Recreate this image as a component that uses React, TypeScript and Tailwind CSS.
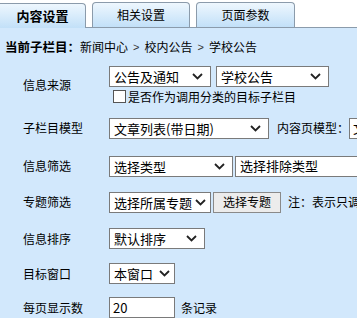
import React from "react";

const font = { fontFamily: '"Noto Sans CJK SC", "Liberation Sans", sans-serif' };

function Chevron() {
  return (
    <svg width="11" height="7" viewBox="0 0 11 7" className="shrink-0">
      <path d="M1 1 L5.5 5.5 L10 1" fill="none" stroke="#222" strokeWidth="1.8" />
    </svg>
  );
}

function Sel({ text, w, pr = "pr-[7px]" }: { text: string; w: string; pr?: string }) {
  return (
    <div className={`${w} h-[21px] shrink-0 border border-[#7a7a7a] bg-white flex items-center justify-between pl-[4px] ${pr} text-[13px] leading-none text-black overflow-hidden whitespace-nowrap`}>
      <span>{text}</span>
      <Chevron />
    </div>
  );
}

function Label({ children }: { children: React.ReactNode }) {
  return <div className="w-[109px] shrink-0 pl-[23px] text-[12px] text-black whitespace-nowrap">{children}</div>;
}

function Sep() {
  return <span className="px-[5px] text-[11px] text-[#333]" style={{ fontFamily: '"Liberation Sans", sans-serif' }}>&gt;</span>;
}

export default function App() {
  return (
    <div className="w-[357px] h-[318px] overflow-hidden bg-white" style={font}>
      {/* tabs */}
      <div className="h-[28px] flex items-end border-b border-[#8b9bab] relative">
        <div className="w-[86px] h-[25px] -mb-px border border-l-0 border-b-0 border-[#8b9bab] rounded-tr-[4px] bg-gradient-to-b from-[#eef7fe] to-[#c2e0f8] flex items-center justify-center text-[13px] font-bold text-black">
          内容设置
        </div>
        <div className="ml-[6px] w-[98px] h-[25px] border border-b-0 border-[#8b9bab] rounded-t-[4px] bg-gradient-to-b from-[#eef7fe] to-[#c2e0f8] flex items-center justify-center text-[12px] text-black">
          相关设置
        </div>
        <div className="ml-[6px] w-[99px] h-[25px] border border-b-0 border-[#8b9bab] rounded-t-[4px] bg-gradient-to-b from-[#eef7fe] to-[#c2e0f8] flex items-center justify-center text-[12px] text-black">
          页面参数
        </div>
      </div>
      <div className="bg-[#d2e8fc] h-[290px] text-[12px] text-black">
        <div className="h-[34px] flex items-center pl-[5px] whitespace-nowrap pt-[4px]">
          <span className="font-bold text-[12.5px]">当前子栏目：</span>
          <span>新闻中心</span>
          <Sep />
          <span>校内公告</span>
          <Sep />
          <span>学校公告</span>
        </div>
        {/* row1 */}
        <div className="h-[46px] flex items-center">
          <Label>信息来源</Label>
          <div className="flex flex-col">
            <div className="flex gap-[5px]">
              <Sel text="公告及通知" w="w-[102px]" />
              <Sel text="学校公告" w="w-[113px]" />
            </div>
            <div className="flex items-center mt-[2px] h-[15px] whitespace-nowrap">
              <div className="w-[13px] h-[13px] border border-[#555] bg-white ml-[4px] mr-[2px]" />
              <span>是否作为调用分类的目标子栏目</span>
            </div>
          </div>
        </div>
        {/* row2 */}
        <div className="h-[40px] flex items-center whitespace-nowrap">
          <Label>子栏目模型</Label>
          <Sel text="文章列表(带日期)" w="w-[160px]" />
          <span className="ml-[8px]">内容页模型：</span>
          <div className="w-[40px] h-[21px] shrink-0 border border-[#7a7a7a] bg-white pl-[3px] flex items-center text-[13px]">文</div>
        </div>
        {/* row3 */}
        <div className="h-[36px] flex items-center whitespace-nowrap">
          <Label>信息筛选</Label>
          <Sel text="选择类型" w="w-[124px]" />
          <div className="ml-[2px] w-[140px] h-[21px] shrink-0 border border-[#7a7a7a] bg-white pl-[4px] flex items-center text-[13px]">选择排除类型</div>
        </div>
        {/* row4 */}
        <div className="h-[36px] flex items-center whitespace-nowrap">
          <Label>专题筛选</Label>
          <Sel text="选择所属专题" w="w-[102px]" pr="pr-[4px]" />
          <div className="ml-[2px] w-[68px] h-[21px] shrink-0 border border-[#8a8a8a] bg-[#ececec] flex items-center justify-center">选择专题</div>
          <span className="ml-[7px]">注：表示只调用所属专题</span>
        </div>
        {/* row5 */}
        <div className="h-[37px] flex items-center">
          <Label>信息排序</Label>
          <Sel text="默认排序" w="w-[96px]" />
        </div>
        {/* row6 */}
        <div className="h-[33px] flex items-center">
          <Label>目标窗口</Label>
          <Sel text="本窗口" w="w-[66px]" pr="pr-[4px]" />
        </div>
        {/* row7 */}
        <div className="h-[35px] flex items-center whitespace-nowrap">
          <Label>每页显示数</Label>
          <div className="w-[66px] h-[21px] shrink-0 border border-[#7a7a7a] bg-white pl-[3px] flex items-center text-[13px]">20</div>
          <span className="ml-[6px]">条记录</span>
        </div>
      </div>
    </div>
  );
}
